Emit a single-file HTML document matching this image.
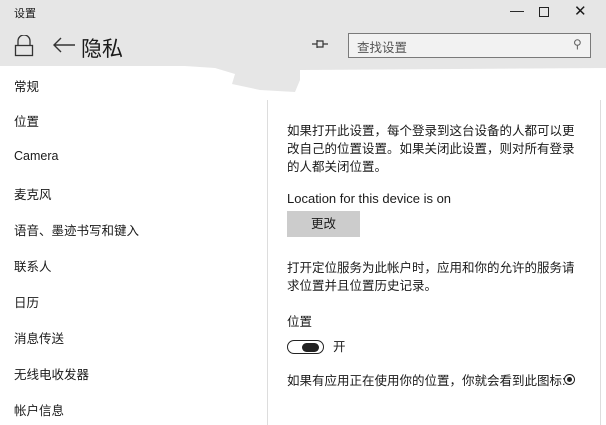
<!DOCTYPE html>
<html><head><meta charset="utf-8"><style>
body{margin:0;width:606px;height:425px;overflow:hidden;background:#fff;position:relative;font-family:"Liberation Sans","Noto Sans CJK SC",sans-serif;color:#1a1a1a}
.a{position:absolute;white-space:nowrap}
.nav{font-size:12.5px;left:14px}
.t{font-size:12.5px;left:287px;line-height:18px}
</style></head><body>
<div class="a" style="left:0;top:0;width:606px;height:66px;background:#e6e6e6"></div>
<svg class="a" style="left:0;top:60px" width="606" height="40"><path d="M170 5 L215 8 L235 14 L232 24 L260 30 L295 32 L300 20 L300 10 L606 8 L606 0 L170 0 Z" fill="#e6e6e6"/></svg>
<div class="a" style="left:14px;top:5px;font-size:11px">设置</div>
<div class="a" style="left:510px;top:2px;font-size:14px">&#8212;</div>
<div class="a" style="left:539px;top:7px;width:8px;height:8px;border:1.3px solid #222"></div>
<div class="a" style="left:574px;top:2px;font-size:15px">✕</div>
<svg class="a" style="left:13px;top:35px" width="22" height="22"><path d="M5 10V6a6 6 0 0 1 12 0v4" fill="none" stroke="#333" stroke-width="1.3"/><rect x="2.5" y="10.5" width="17" height="10" fill="none" stroke="#333" stroke-width="1.3"/></svg>
<svg class="a" style="left:52px;top:36px" width="24" height="18"><path d="M23 9H2M9 2L2 9l7 7" fill="none" stroke="#333" stroke-width="1.4"/></svg>
<div class="a" style="left:81px;top:33px;font-size:21px">隐私</div>
<svg class="a" style="left:311px;top:38px" width="18" height="12"><path d="M1 6h5M6 2v8M6 3h6v6H6M12 6h5" fill="none" stroke="#333" stroke-width="1.2"/></svg>
<div class="a" style="left:348px;top:33px;width:241px;height:23px;border:1.5px solid #7a7a7a;background:#f2f2f2"></div>
<div class="a" style="left:357px;top:37px;font-size:12.5px;color:#555">查找设置</div>
<div class="a" style="left:573px;top:37px;font-size:12px;color:#666">⚲</div>
<div class="a" style="left:267px;top:100px;width:1px;height:325px;background:#ddd"></div>
<div class="a" style="left:600px;top:100px;width:1px;height:325px;background:#ddd"></div>
<div class="a nav" style="top:76px">常规</div>
<div class="a nav" style="top:111px">位置</div>
<div class="a nav" style="top:149px">Camera</div>
<div class="a nav" style="top:184px">麦克风</div>
<div class="a nav" style="top:220px">语音、墨迹书写和键入</div>
<div class="a nav" style="top:256px">联系人</div>
<div class="a nav" style="top:292px">日历</div>
<div class="a nav" style="top:328px">消息传送</div>
<div class="a nav" style="top:364px">无线电收发器</div>
<div class="a nav" style="top:400px">帐户信息</div>
<div class="a t" style="top:122px">如果打开此设置，每个登录到这台设备的人都可以更<br>改自己的位置设置。如果关闭此设置，则对所有登录<br>的人都关闭位置。</div>
<div class="a t" style="top:190px;font-size:13px">Location for this device is on</div>
<div class="a" style="left:287px;top:211px;width:73px;height:26px;background:#ccc;font-size:12.5px;text-align:center;line-height:26px">更改</div>
<div class="a t" style="top:259px">打开定位服务为此帐户时，应用和你的允许的服务请<br>求位置并且位置历史记录。</div>
<div class="a t" style="top:313px">位置</div>
<div class="a" style="left:287px;top:340px;width:35px;height:12px;border:1.5px solid #222;border-radius:8px"></div>
<div class="a" style="left:302px;top:343px;width:17px;height:9px;background:#222;border-radius:5px"></div>
<div class="a t" style="top:338px;left:333px">开</div>
<div class="a t" style="top:372px">如果有应用正在使用你的位置，你就会看到此图标:</div>
<div class="a" style="left:564px;top:374px;width:9px;height:9px;border:1.3px solid #222;border-radius:50%"></div>
<div class="a" style="left:567px;top:377px;width:5px;height:5px;background:#222;border-radius:50%"></div>
</body></html>
